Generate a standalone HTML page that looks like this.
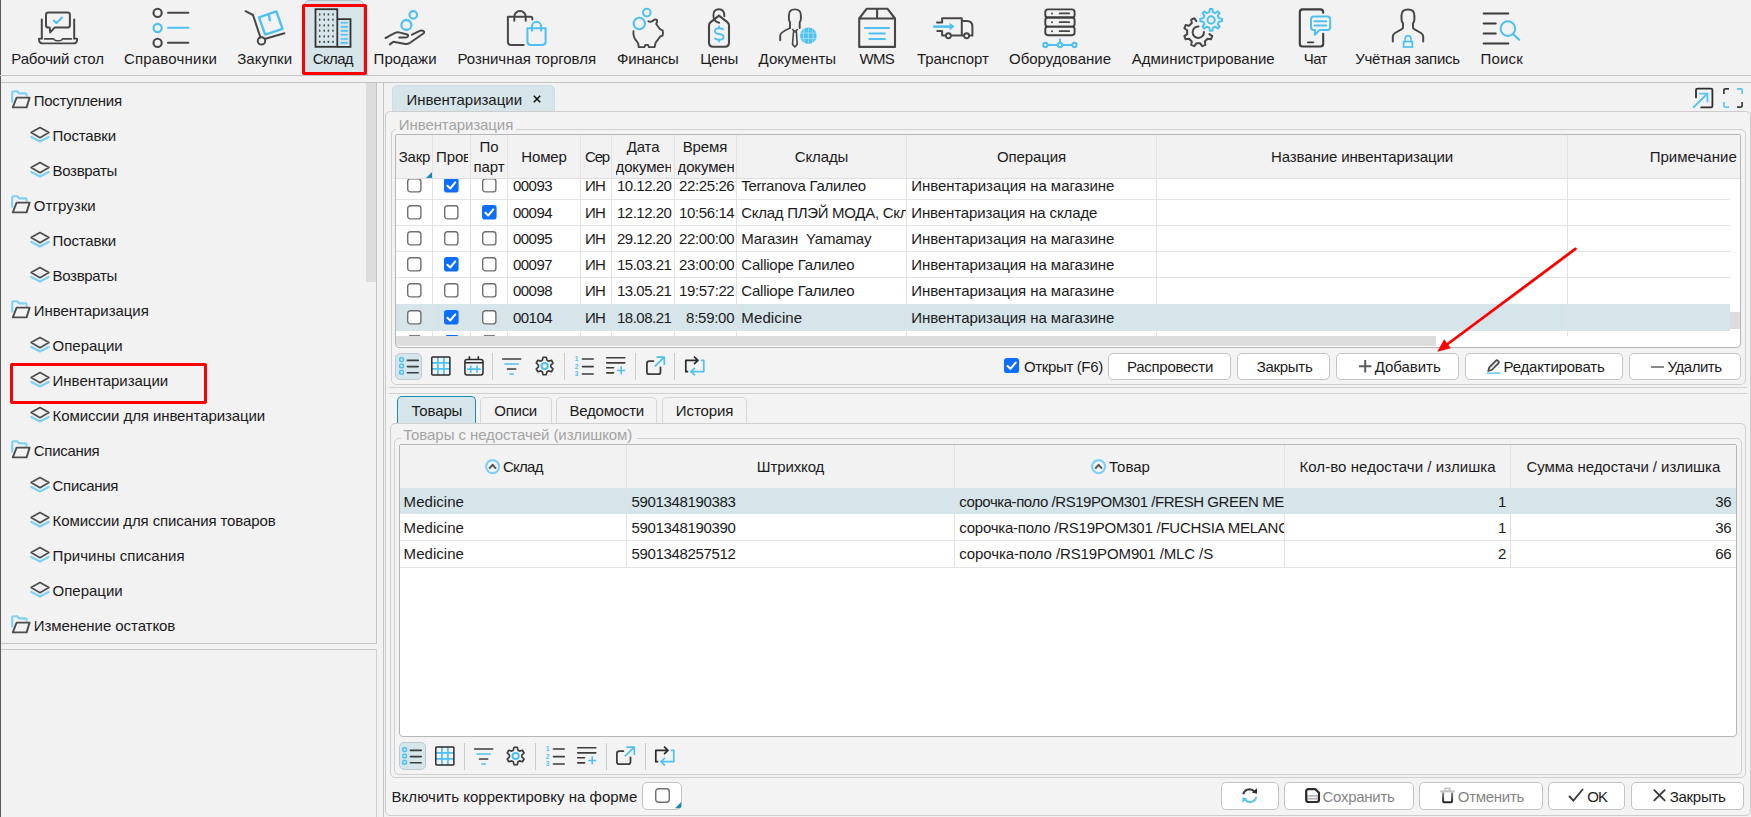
<!DOCTYPE html>
<html><head><meta charset="utf-8"><title>UI</title>
<style>
html,body{margin:0;padding:0;}
body{width:1751px;height:817px;overflow:hidden;background:#f2f2f2;font-family:"Liberation Sans", sans-serif;position:relative;}
.a{position:absolute;box-sizing:border-box;}
.t{position:absolute;white-space:pre;line-height:20px;font-size:15px;}
svg{overflow:visible}
</style></head><body>
<div class="a" style="left:0px;top:0px;width:1px;height:817px;background:#5c5c5c;"></div>
<div class="a" style="left:0px;top:75px;width:1751px;height:1px;background:#c4c4c4;"></div>
<div class="a" style="left:304px;top:-0.2px;width:59.6px;height:76.2px;background:#d5e5ea;border:1px solid #b9c2c5;border-radius:5px 5px 0 0;"></div>
<div class="a" style="left:302px;top:3.8px;width:65px;height:71.2px;border:3px solid #ff0000;border-radius:2px;"></div>
<div class="t" style="left:11.30px;top:49.00px;font-size:15px;color:#1b1b1b;letter-spacing:-0.139px;">Рабочий стол</div>
<div class="t" style="left:123.90px;top:49.00px;font-size:15px;color:#1b1b1b;letter-spacing:0.202px;">Справочники</div>
<div class="t" style="left:237.30px;top:49.00px;font-size:15px;color:#1b1b1b;letter-spacing:0.014px;">Закупки</div>
<div class="t" style="left:312.70px;top:49.00px;font-size:15px;color:#1b1b1b;letter-spacing:-0.624px;">Склад</div>
<div class="t" style="left:373.60px;top:49.00px;font-size:15px;color:#1b1b1b;letter-spacing:0.049px;">Продажи</div>
<div class="t" style="left:457.50px;top:49.00px;font-size:15px;color:#1b1b1b;letter-spacing:-0.037px;">Розничная торговля</div>
<div class="t" style="left:617.00px;top:49.00px;font-size:15px;color:#1b1b1b;letter-spacing:-0.198px;">Финансы</div>
<div class="t" style="left:700.20px;top:49.00px;font-size:15px;color:#1b1b1b;letter-spacing:-0.154px;">Цены</div>
<div class="t" style="left:758.60px;top:49.00px;font-size:15px;color:#1b1b1b;letter-spacing:0.030px;">Документы</div>
<div class="t" style="left:859.60px;top:49.00px;font-size:15px;color:#1b1b1b;letter-spacing:-0.791px;">WMS</div>
<div class="t" style="left:916.90px;top:49.00px;font-size:15px;color:#1b1b1b;letter-spacing:-0.027px;">Транспорт</div>
<div class="t" style="left:1009.00px;top:49.00px;font-size:15px;color:#1b1b1b;">Оборудование</div>
<div class="t" style="left:1131.80px;top:49.00px;font-size:15px;color:#1b1b1b;letter-spacing:-0.009px;">Администрирование</div>
<div class="t" style="left:1303.80px;top:49.00px;font-size:15px;color:#1b1b1b;letter-spacing:-0.630px;">Чат</div>
<div class="t" style="left:1355.20px;top:49.00px;font-size:15px;color:#1b1b1b;letter-spacing:-0.280px;">Учётная запись</div>
<div class="t" style="left:1480.40px;top:49.00px;font-size:15px;color:#1b1b1b;letter-spacing:0.204px;">Поиск</div>
<svg class="a" style="left:30px;top:4px;" width="60" height="48" viewBox="0 0 60 48" fill="none"><path d="M18.4 8.6 H37.5 Q39.9 8.6 39.9 11 V21.2 Q39.9 23.6 37.5 23.6 H24.6 L20.2 28.4 L19.7 23.6 H18.4 Q16 23.6 16 21.2 V11 Q16 8.6 18.4 8.6 Z" stroke="#474747" stroke-width="2" fill="none" stroke-linecap="round" stroke-linejoin="round" /><path d="M11.8 15.4 V34.4 M44.2 15.4 V34.4" stroke="#474747" stroke-width="2" fill="none" stroke-linecap="round" stroke-linejoin="round" /><path d="M9 34.6 H11.8 M44.2 34.6 H47.1 M9 34.6 V35.4 Q9 39.4 13 39.4 H43.1 Q47.1 39.4 47.1 35.4 V34.6" stroke="#474747" stroke-width="1.9" fill="none" stroke-linecap="round" stroke-linejoin="round" /><path d="M14.6 34.9 H23.6 Q24.8 36.8 27 36.8 H29.2 Q31.4 36.8 32.6 34.9 H41.4" stroke="#474747" stroke-width="1.6" fill="none" stroke-linecap="round" stroke-linejoin="round" /><path d="M23.8 16.6 L26.5 19 L32 13.6" stroke="#4fc1f1" stroke-width="2.1" fill="none" stroke-linecap="round" stroke-linejoin="round" /></svg>
<svg class="a" style="left:140px;top:4px;" width="60" height="48" viewBox="0 0 60 48" fill="none"><circle cx="17.6" cy="8.9" r="4.1" stroke="#474747" stroke-width="2.1" fill="none"/><path d="M28 8.7 H48.4" stroke="#474747" stroke-width="2" fill="none" stroke-linecap="round" stroke-linejoin="round" /><circle cx="17.6" cy="24" r="4.1" stroke="#4fc1f1" stroke-width="2.1" fill="none"/><path d="M28 23.8 H48.4" stroke="#4fc1f1" stroke-width="2" fill="none" stroke-linecap="round" stroke-linejoin="round" /><circle cx="17.6" cy="38.9" r="4.1" stroke="#474747" stroke-width="2.1" fill="none"/><path d="M28 38.7 H48.4" stroke="#474747" stroke-width="2" fill="none" stroke-linecap="round" stroke-linejoin="round" /></svg>
<svg class="a" style="left:235px;top:4px;" width="60" height="48" viewBox="0 0 60 48" fill="none"><path d="M24 13.3 L41.4 7.4 L47.5 24.8 L30.2 30.6 Z M33.6 10.2 L34.9 16.2" stroke="#4fc1f1" stroke-width="2.4" fill="none" stroke-linecap="round" stroke-linejoin="round" /><path d="M10.6 7.2 L18 11 L25.3 33" stroke="#474747" stroke-width="2" fill="none" stroke-linecap="round" stroke-linejoin="round" /><path d="M30.4 34.8 L49.4 29.2" stroke="#474747" stroke-width="2" fill="none" stroke-linecap="round" stroke-linejoin="round" /><circle cx="26.5" cy="36.9" r="3.7" stroke="#474747" stroke-width="2" fill="none"/></svg>
<svg class="a" style="left:303px;top:4px;" width="60" height="48" viewBox="0 0 60 48" fill="none"><rect x="12.5" y="5.2" width="21.8" height="37.6" stroke="#333" stroke-width="1.8" fill="none"/><path d="M34.3 15.1 H47.5 V42.8 H34.3" stroke="#333" stroke-width="1.8" fill="none"/><rect x="15.95" y="9.2" width="1.5" height="2.2" rx="0.5" fill="#4a4a4a"/><rect x="15.95" y="14.6" width="1.5" height="2.2" rx="0.5" fill="#4a4a4a"/><rect x="15.95" y="20.2" width="1.5" height="2.2" rx="0.5" fill="#4a4a4a"/><rect x="15.95" y="25.6" width="1.5" height="2.2" rx="0.5" fill="#4a4a4a"/><rect x="15.95" y="31.2" width="1.5" height="2.2" rx="0.5" fill="#4a4a4a"/><rect x="15.95" y="36.7" width="1.5" height="2.2" rx="0.5" fill="#4a4a4a"/><rect x="20.45" y="9.2" width="1.5" height="2.2" rx="0.5" fill="#4a4a4a"/><rect x="20.45" y="14.6" width="1.5" height="2.2" rx="0.5" fill="#4a4a4a"/><rect x="20.45" y="20.2" width="1.5" height="2.2" rx="0.5" fill="#4a4a4a"/><rect x="20.45" y="25.6" width="1.5" height="2.2" rx="0.5" fill="#4a4a4a"/><rect x="20.45" y="31.2" width="1.5" height="2.2" rx="0.5" fill="#4a4a4a"/><rect x="20.45" y="36.7" width="1.5" height="2.2" rx="0.5" fill="#4a4a4a"/><rect x="24.65" y="9.2" width="1.5" height="2.2" rx="0.5" fill="#4a4a4a"/><rect x="24.65" y="14.6" width="1.5" height="2.2" rx="0.5" fill="#4a4a4a"/><rect x="24.65" y="20.2" width="1.5" height="2.2" rx="0.5" fill="#4a4a4a"/><rect x="24.65" y="25.6" width="1.5" height="2.2" rx="0.5" fill="#4a4a4a"/><rect x="24.65" y="31.2" width="1.5" height="2.2" rx="0.5" fill="#4a4a4a"/><rect x="24.65" y="36.7" width="1.5" height="2.2" rx="0.5" fill="#4a4a4a"/><rect x="29.25" y="9.2" width="1.5" height="2.2" rx="0.5" fill="#4a4a4a"/><rect x="29.25" y="14.6" width="1.5" height="2.2" rx="0.5" fill="#4a4a4a"/><rect x="29.25" y="20.2" width="1.5" height="2.2" rx="0.5" fill="#4a4a4a"/><rect x="29.25" y="25.6" width="1.5" height="2.2" rx="0.5" fill="#4a4a4a"/><rect x="29.25" y="31.2" width="1.5" height="2.2" rx="0.5" fill="#4a4a4a"/><rect x="29.25" y="36.7" width="1.5" height="2.2" rx="0.5" fill="#4a4a4a"/><path d="M38.2 18.8 H44.4" stroke="#4fc1f1" stroke-width="1.6" stroke-linecap="round"/><path d="M38.2 22.9 H44.4" stroke="#4fc1f1" stroke-width="1.6" stroke-linecap="round"/><path d="M38.2 26.9 H44.4" stroke="#4fc1f1" stroke-width="1.6" stroke-linecap="round"/><path d="M38.2 30.8 H44.4" stroke="#4fc1f1" stroke-width="1.6" stroke-linecap="round"/><path d="M38.2 35 H44.4" stroke="#4fc1f1" stroke-width="1.6" stroke-linecap="round"/><path d="M38.2 38.9 H44.4" stroke="#4fc1f1" stroke-width="1.6" stroke-linecap="round"/></svg>
<svg class="a" style="left:375px;top:4px;" width="60" height="48" viewBox="0 0 60 48" fill="none"><circle cx="38.3" cy="10.9" r="3.75" stroke="#4fc1f1" stroke-width="2.2" fill="none"/><circle cx="31.4" cy="21" r="5" stroke="#4fc1f1" stroke-width="2.3" fill="none"/><path d="M10.6 34 Q17 30.5 20 28.9 Q22.5 28 25 28.6 L31.5 30.3 Q33.6 31 33 32.4 Q32.4 33.6 30.4 33.6 H24.2" stroke="#474747" stroke-width="2" fill="none" stroke-linecap="round" stroke-linejoin="round" /><path d="M14.9 40.4 L18.3 37.7 L30.4 40 Q32.6 40.3 34.4 39.2 L49 29 Q49.6 27.6 48.4 26.9 Q47 26.2 45.4 26.7 L37 30.7" stroke="#474747" stroke-width="2" fill="none" stroke-linecap="round" stroke-linejoin="round" /></svg>
<svg class="a" style="left:497px;top:4px;" width="60" height="48" viewBox="0 0 60 48" fill="none"><path d="M35.3 15.4 V14.2 Q35.3 12.7 33.8 12.7 H10.9 V37.4 Q10.9 41.1 14.6 41.1 H26.6" stroke="#474747" stroke-width="2" fill="none" stroke-linecap="round" stroke-linejoin="round" /><path d="M17.3 16.8 V12.7 A5.7 5.7 0 0 1 28.7 12.7 V16.8" stroke="#474747" stroke-width="2" fill="none" stroke-linecap="round" stroke-linejoin="round" /><path d="M30.4 24.2 H48.6 V37.6 Q48.6 41 45.2 41 H33.8 Q30.4 41 30.4 37.6 Z" stroke="#4fc1f1" stroke-width="2" fill="none" stroke-linecap="round" stroke-linejoin="round" /><path d="M35 26.8 V22.3 A4.55 4.55 0 0 1 44.1 22.3 V26.8" stroke="#4fc1f1" stroke-width="2" fill="none" stroke-linecap="round" stroke-linejoin="round" /></svg>
<svg class="a" style="left:618px;top:4px;" width="60" height="48" viewBox="0 0 60 48" fill="none"><circle cx="28.8" cy="8.6" r="3.8" stroke="#4fc1f1" stroke-width="2" fill="none"/><circle cx="21.3" cy="19.5" r="5.7" stroke="#4fc1f1" stroke-width="2.1" fill="none"/><path d="M15.5 27.2 Q14.6 33.2 19.4 38.2 Q20.4 39.4 20.7 43.1 H26.4 L27.3 40.9 H30 L30.9 43.1 H36.6 L37.6 38.8 L42.3 32.4 L44.6 31.6 Q45.3 28.8 44.7 26.5 L42 25.2 L38.2 20 Q39.6 17.4 39 16 Q37.8 15.2 36.3 15.7 Q34.6 17.2 33.4 17.6 Q31.8 17.9 30.4 17.3" stroke="#474747" stroke-width="1.9" fill="none" stroke-linecap="round" stroke-linejoin="round" /></svg>
<svg class="a" style="left:689px;top:4px;" width="60" height="48" viewBox="0 0 60 48" fill="none"><path d="M30 11.6 L38.6 18.4 Q40 19.5 40 21.4 V38.6 Q40 42.8 35.8 42.8 H24.2 Q20 42.8 20 38.6 V21.4 Q20 19.5 21.4 18.4 Z" stroke="#474747" stroke-width="2.1" fill="none" stroke-linecap="round" stroke-linejoin="round" /><path d="M35.4 12.2 Q35.4 5.2 30 5.2 Q24.4 5.2 24.4 11.2 Q24.4 17.6 30.2 18.7" stroke="#474747" stroke-width="1.9" fill="none" stroke-linecap="round" stroke-linejoin="round" /><path d="M34 25.2 Q32.4 24.3 30 24.3 Q26 24.3 26 27.2 Q26 29.6 30 30 Q34.6 30.6 34.6 33 Q34.6 35.7 30.4 35.7 Q28 35.7 26.2 34.6 M30 22.4 V24.2 M30 35.8 V37.6" stroke="#4fc1f1" stroke-width="1.9" fill="none" stroke-linecap="round" stroke-linejoin="round" /></svg>
<svg class="a" style="left:768px;top:4px;" width="60" height="48" viewBox="0 0 60 48" fill="none"><path d="M22 24 V18.2 Q20.9 16.6 20.9 14.4 V11.4 Q20.9 5.4 26.9 5.4 Q32.9 5.4 32.9 11.4 V14.4 Q32.9 16.6 31.7 18.2 V24" stroke="#474747" stroke-width="1.9" fill="none" stroke-linecap="round" stroke-linejoin="round" /><path d="M22 24 Q12.2 28.6 12.2 31.4 V36.2" stroke="#474747" stroke-width="1.9" fill="none" stroke-linecap="round" stroke-linejoin="round" /><path d="M24.6 25.5 L27 27.8 L29.4 25.5 M25.5 27.8 L24.5 40.4 L26.9 43 L29.2 40.4 L28.4 27.8" stroke="#474747" stroke-width="1.6" fill="none" stroke-linecap="round" stroke-linejoin="round" /><circle cx="40.4" cy="31.7" r="8.3" fill="#4fc1f1"/><path d="M32.4 29 H48.4 M32.4 34.4 H48.4 M40.4 23.6 V39.8 M36.4 24.4 Q34.4 31.7 36.4 39 M44.4 24.4 Q46.4 31.7 44.4 39" stroke="#a5def8" stroke-width="0.9" fill="none"/></svg>
<svg class="a" style="left:847px;top:4px;" width="60" height="48" viewBox="0 0 60 48" fill="none"><path d="M12.2 14.5 H48 V42.9 H12.2 Z M12.2 14.5 L19.6 4.8 H40.6 L48 14.5 M30.1 4.8 V14.5" stroke="#474747" stroke-width="2.1" fill="none" stroke-linecap="round" stroke-linejoin="round" /><path d="M17.9 24 H42 M22.3 29.4 H37.9 M22.3 35 H37.9" stroke="#4fc1f1" stroke-width="2" fill="none" stroke-linecap="round" stroke-linejoin="round" /></svg>
<svg class="a" style="left:923px;top:4px;" width="60" height="48" viewBox="0 0 60 48" fill="none"><path d="M14 18.4 H19.1 V14.2 H38.8 V31.4 M14.3 27 H19.1 V31.4 H22.6 M28.2 31.4 H40.8 M46.4 31.4 H49.4 V22.6 Q49.4 17.1 44 17.1 H38.8" stroke="#474747" stroke-width="2" fill="none" stroke-linecap="round" stroke-linejoin="round" /><circle cx="25.4" cy="31.7" r="2.5" stroke="#474747" stroke-width="1.9" fill="none"/><circle cx="43.6" cy="31.7" r="2.5" stroke="#474747" stroke-width="1.9" fill="none"/><path d="M10.2 22.6 H27" stroke="#4fc1f1" stroke-width="2.6"/><path d="M26.6 18.7 L31.6 22.6 L26.6 26.5 Z" fill="#4fc1f1"/></svg>
<svg class="a" style="left:1030px;top:4px;" width="60" height="48" viewBox="0 0 60 48" fill="none"><rect x="15.3" y="5.4" width="29.3" height="8.1" rx="2.6" stroke="#3f3f3f" stroke-width="1.9" fill="none"/><rect x="15.3" y="13.5" width="29.3" height="9.1" rx="2.6" stroke="#3f3f3f" stroke-width="1.9" fill="none"/><rect x="15.3" y="22.6" width="29.3" height="8.6" rx="2.6" stroke="#3f3f3f" stroke-width="1.9" fill="none"/><circle cx="22" cy="9.4" r="1" fill="#474747"/><path d="M29.6 9.4 H39.2" stroke="#474747" stroke-width="1.7" fill="none" stroke-linecap="round" stroke-linejoin="round" /><circle cx="22" cy="18.2" r="1" fill="#474747"/><path d="M29.6 18.2 H39.2" stroke="#474747" stroke-width="1.7" fill="none" stroke-linecap="round" stroke-linejoin="round" /><circle cx="22" cy="27.2" r="1" fill="#474747"/><path d="M29.6 27.2 H39.2" stroke="#474747" stroke-width="1.7" fill="none" stroke-linecap="round" stroke-linejoin="round" /><path d="M17.6 41 H27.8 M32.2 41 H42.3 M30 35.6 V38.8" stroke="#4fc1f1" stroke-width="2" fill="none" stroke-linecap="round" stroke-linejoin="round" /><circle cx="15.4" cy="41" r="2.15" stroke="#4fc1f1" stroke-width="2" fill="none"/><circle cx="30" cy="41" r="2.15" stroke="#4fc1f1" stroke-width="2" fill="none"/><circle cx="44.5" cy="41" r="2.15" stroke="#4fc1f1" stroke-width="2" fill="none"/></svg>
<svg class="a" style="left:1173px;top:4px;" width="60" height="48" viewBox="0 0 60 48" fill="none"><path d="M45.80 14.12 L48.92 14.62 L48.92 17.18 L45.80 17.68 L44.80 20.08 L46.66 22.65 L44.85 24.46 L42.28 22.60 L39.88 23.60 L39.38 26.72 L36.82 26.72 L36.32 23.60 L33.92 22.60 L31.35 24.46 L29.54 22.65 L31.40 20.08 L30.40 17.68 L27.28 17.18 L27.28 14.62 L30.40 14.12 L31.40 11.72 L29.54 9.15 L31.35 7.34 L33.92 9.20 L36.32 8.20 L36.82 5.08 L39.38 5.08 L39.88 8.20 L42.28 9.20 L44.85 7.34 L46.66 9.15 L44.80 11.72 Z" stroke="#4fc1f1" stroke-width="2" fill="none" stroke-linecap="round" stroke-linejoin="round" /><circle cx="38.1" cy="15.9" r="3.6" stroke="#4fc1f1" stroke-width="2" fill="none"/><path d="M36.43 30.14 L39.26 32.14 L37.95 35.29 L34.55 34.70 L31.80 37.45 L32.39 40.85 L29.24 42.16 L27.24 39.33 L23.36 39.33 L21.36 42.16 L18.21 40.85 L18.80 37.45 L16.05 34.70 L12.65 35.29 L11.34 32.14 L14.17 30.14 L14.17 26.26 L11.34 24.26 L12.65 21.11 L16.05 21.70 L18.80 18.95 L18.21 15.55 L21.36 14.24 L23.36 17.07" stroke="#474747" stroke-width="2" fill="none" stroke-linecap="round" stroke-linejoin="round" /><path d="M25.50 22.50 A5.7 5.7 0 1 0 31.00 28.00" stroke="#474747" stroke-width="2" fill="none" stroke-linecap="round" stroke-linejoin="round" /></svg>
<svg class="a" style="left:1285px;top:4px;" width="60" height="48" viewBox="0 0 60 48" fill="none"><path d="M38.2 8.8 V8.2 Q38.2 5.4 35.4 5.4 H17.6 Q14.8 5.4 14.8 8.2 V39.7 Q14.8 42.5 17.6 42.5 H35.4 Q38.2 42.5 38.2 39.7 V29.8" stroke="#3c3c3c" stroke-width="2.1" fill="none" stroke-linecap="round" stroke-linejoin="round" /><path d="M22.8 38.3 H28.4" stroke="#3c3c3c" stroke-width="1.8" fill="none" stroke-linecap="round" stroke-linejoin="round" /><path d="M28.8 12.5 H42.4 Q45.2 12.5 45.2 15.3 V23.3 Q45.2 26.1 42.4 26.1 H34.6 L29.8 30.8 L30 26.1 H28.8 Q26 26.1 26 23.3 V15.3 Q26 12.5 28.8 12.5 Z" stroke="#4fc1f1" stroke-width="2" fill="none" stroke-linecap="round" stroke-linejoin="round" /><path d="M29.4 17.2 H41.2 M29.4 21.6 H41.2" stroke="#4fc1f1" stroke-width="2" fill="none" stroke-linecap="round" stroke-linejoin="round" /></svg>
<svg class="a" style="left:1378px;top:4px;" width="60" height="48" viewBox="0 0 60 48" fill="none"><path d="M14.8 37.4 V32.6 Q14.8 30.4 17 29 L23.8 25.2 Q25 24.6 25 23.2 V19.4 Q23.5 17.6 23.5 15 V11.4 Q23.5 5.4 30 5.4 Q36.4 5.4 36.4 11.4 V15 Q36.4 17.6 35 19.4 V23.2 Q35 24.6 36.2 25.2 L43 29 Q45.2 30.4 45.2 32.6 V37.4" stroke="#474747" stroke-width="2" fill="none" stroke-linecap="round" stroke-linejoin="round" /><rect x="25.6" y="37.6" width="8.8" height="5.4" stroke="#4fc1f1" stroke-width="1.7" fill="none"/><path d="M27.2 37.4 V34.4 A2.85 2.85 0 0 1 32.9 34.4 V37.4" stroke="#4fc1f1" stroke-width="1.7" fill="none" stroke-linecap="round" stroke-linejoin="round" /></svg>
<svg class="a" style="left:1471px;top:4px;" width="60" height="48" viewBox="0 0 60 48" fill="none"><path d="M12.6 9.5 H37.4 M12.6 19.5 H24.8 M12.6 29.5 H24.8 M12.6 39.5 H37.4" stroke="#3a3a3a" stroke-width="1.9" fill="none" stroke-linecap="round" stroke-linejoin="round" /><circle cx="36.9" cy="24.6" r="7.3" stroke="#4fc1f1" stroke-width="2" fill="none"/><path d="M42.3 30.2 L48.2 35.7" stroke="#4fc1f1" stroke-width="2.2" fill="none" stroke-linecap="round" stroke-linejoin="round" /></svg>
<div class="a" style="left:1px;top:82px;width:1750px;height:1px;background:#c4c4c4;"></div>
<div class="a" style="left:376px;top:82px;width:1px;height:562px;background:#c4c4c4;"></div>
<div class="a" style="left:1px;top:643px;width:376px;height:1px;background:#c4c4c4;"></div>
<div class="a" style="left:1px;top:648.8px;width:376px;height:1px;background:#c8c8c8;"></div>
<div class="a" style="left:376px;top:649px;width:1px;height:168px;background:#d0d0d0;"></div>
<div class="a" style="left:366px;top:83px;width:10px;height:199px;background:#dcdcdc;"></div>
<svg class="a" style="left:10.5px;top:90px;" width="20" height="19" viewBox="0 0 20 19" fill="none"><path d="M1.2 12.5 V2.6 Q1.2 1.2 2.6 1.2 H6.2 L8.2 3.4 H14.4 Q15.6 3.4 15.6 4.8 V6.5" stroke="#7fd0f5" stroke-width="2.1" fill="none"/><path d="M5.6 7.6 H18.6 L15.6 17.4 H1.8 Z" stroke="#4d4d4d" stroke-width="1.9" stroke-linejoin="round" fill="none"/></svg>
<div class="t" style="left:33.80px;top:91.00px;font-size:15px;color:#1b1b1b;letter-spacing:-0.288px;">Поступления</div>
<svg class="a" style="left:29.8px;top:126.1px;" width="20" height="17" viewBox="0 0 20 17" fill="none"><path d="M1.4 11 L10 15.6 L18.6 11" stroke="#7fd0f5" stroke-width="2.3" stroke-linejoin="round" stroke-linecap="round" fill="none"/><path d="M10 1.5 L18.9 6.6 L10 11.7 L1.1 6.6 Z" stroke="#4d4d4d" stroke-width="1.7" stroke-linejoin="round" fill="none"/></svg>
<div class="t" style="left:52.60px;top:126.00px;font-size:15px;color:#1b1b1b;letter-spacing:-0.160px;">Поставки</div>
<svg class="a" style="left:29.8px;top:161.1px;" width="20" height="17" viewBox="0 0 20 17" fill="none"><path d="M1.4 11 L10 15.6 L18.6 11" stroke="#7fd0f5" stroke-width="2.3" stroke-linejoin="round" stroke-linecap="round" fill="none"/><path d="M10 1.5 L18.9 6.6 L10 11.7 L1.1 6.6 Z" stroke="#4d4d4d" stroke-width="1.7" stroke-linejoin="round" fill="none"/></svg>
<div class="t" style="left:52.60px;top:161.00px;font-size:15px;color:#1b1b1b;letter-spacing:-0.329px;">Возвраты</div>
<svg class="a" style="left:10.5px;top:195px;" width="20" height="19" viewBox="0 0 20 19" fill="none"><path d="M1.2 12.5 V2.6 Q1.2 1.2 2.6 1.2 H6.2 L8.2 3.4 H14.4 Q15.6 3.4 15.6 4.8 V6.5" stroke="#7fd0f5" stroke-width="2.1" fill="none"/><path d="M5.6 7.6 H18.6 L15.6 17.4 H1.8 Z" stroke="#4d4d4d" stroke-width="1.9" stroke-linejoin="round" fill="none"/></svg>
<div class="t" style="left:33.80px;top:196.00px;font-size:15px;color:#1b1b1b;letter-spacing:0.061px;">Отгрузки</div>
<svg class="a" style="left:29.8px;top:231.1px;" width="20" height="17" viewBox="0 0 20 17" fill="none"><path d="M1.4 11 L10 15.6 L18.6 11" stroke="#7fd0f5" stroke-width="2.3" stroke-linejoin="round" stroke-linecap="round" fill="none"/><path d="M10 1.5 L18.9 6.6 L10 11.7 L1.1 6.6 Z" stroke="#4d4d4d" stroke-width="1.7" stroke-linejoin="round" fill="none"/></svg>
<div class="t" style="left:52.60px;top:231.00px;font-size:15px;color:#1b1b1b;letter-spacing:-0.160px;">Поставки</div>
<svg class="a" style="left:29.8px;top:266.1px;" width="20" height="17" viewBox="0 0 20 17" fill="none"><path d="M1.4 11 L10 15.6 L18.6 11" stroke="#7fd0f5" stroke-width="2.3" stroke-linejoin="round" stroke-linecap="round" fill="none"/><path d="M10 1.5 L18.9 6.6 L10 11.7 L1.1 6.6 Z" stroke="#4d4d4d" stroke-width="1.7" stroke-linejoin="round" fill="none"/></svg>
<div class="t" style="left:52.60px;top:266.00px;font-size:15px;color:#1b1b1b;letter-spacing:-0.329px;">Возвраты</div>
<svg class="a" style="left:10.5px;top:300px;" width="20" height="19" viewBox="0 0 20 19" fill="none"><path d="M1.2 12.5 V2.6 Q1.2 1.2 2.6 1.2 H6.2 L8.2 3.4 H14.4 Q15.6 3.4 15.6 4.8 V6.5" stroke="#7fd0f5" stroke-width="2.1" fill="none"/><path d="M5.6 7.6 H18.6 L15.6 17.4 H1.8 Z" stroke="#4d4d4d" stroke-width="1.9" stroke-linejoin="round" fill="none"/></svg>
<div class="t" style="left:33.80px;top:301.00px;font-size:15px;color:#1b1b1b;letter-spacing:-0.041px;">Инвентаризация</div>
<svg class="a" style="left:29.8px;top:336.1px;" width="20" height="17" viewBox="0 0 20 17" fill="none"><path d="M1.4 11 L10 15.6 L18.6 11" stroke="#7fd0f5" stroke-width="2.3" stroke-linejoin="round" stroke-linecap="round" fill="none"/><path d="M10 1.5 L18.9 6.6 L10 11.7 L1.1 6.6 Z" stroke="#4d4d4d" stroke-width="1.7" stroke-linejoin="round" fill="none"/></svg>
<div class="t" style="left:52.60px;top:336.00px;font-size:15px;color:#1b1b1b;letter-spacing:-0.021px;">Операции</div>
<svg class="a" style="left:29.8px;top:371.1px;" width="20" height="17" viewBox="0 0 20 17" fill="none"><path d="M1.4 11 L10 15.6 L18.6 11" stroke="#7fd0f5" stroke-width="2.3" stroke-linejoin="round" stroke-linecap="round" fill="none"/><path d="M10 1.5 L18.9 6.6 L10 11.7 L1.1 6.6 Z" stroke="#4d4d4d" stroke-width="1.7" stroke-linejoin="round" fill="none"/></svg>
<div class="t" style="left:52.60px;top:371.00px;font-size:15px;color:#1b1b1b;letter-spacing:-0.023px;">Инвентаризации</div>
<svg class="a" style="left:29.8px;top:406.1px;" width="20" height="17" viewBox="0 0 20 17" fill="none"><path d="M1.4 11 L10 15.6 L18.6 11" stroke="#7fd0f5" stroke-width="2.3" stroke-linejoin="round" stroke-linecap="round" fill="none"/><path d="M10 1.5 L18.9 6.6 L10 11.7 L1.1 6.6 Z" stroke="#4d4d4d" stroke-width="1.7" stroke-linejoin="round" fill="none"/></svg>
<div class="t" style="left:52.60px;top:406.00px;font-size:15px;color:#1b1b1b;letter-spacing:-0.090px;">Комиссии для инвентаризации</div>
<svg class="a" style="left:10.5px;top:440px;" width="20" height="19" viewBox="0 0 20 19" fill="none"><path d="M1.2 12.5 V2.6 Q1.2 1.2 2.6 1.2 H6.2 L8.2 3.4 H14.4 Q15.6 3.4 15.6 4.8 V6.5" stroke="#7fd0f5" stroke-width="2.1" fill="none"/><path d="M5.6 7.6 H18.6 L15.6 17.4 H1.8 Z" stroke="#4d4d4d" stroke-width="1.9" stroke-linejoin="round" fill="none"/></svg>
<div class="t" style="left:33.80px;top:441.00px;font-size:15px;color:#1b1b1b;letter-spacing:-0.309px;">Списания</div>
<svg class="a" style="left:29.8px;top:476.1px;" width="20" height="17" viewBox="0 0 20 17" fill="none"><path d="M1.4 11 L10 15.6 L18.6 11" stroke="#7fd0f5" stroke-width="2.3" stroke-linejoin="round" stroke-linecap="round" fill="none"/><path d="M10 1.5 L18.9 6.6 L10 11.7 L1.1 6.6 Z" stroke="#4d4d4d" stroke-width="1.7" stroke-linejoin="round" fill="none"/></svg>
<div class="t" style="left:52.60px;top:476.00px;font-size:15px;color:#1b1b1b;letter-spacing:-0.309px;">Списания</div>
<svg class="a" style="left:29.8px;top:511.1px;" width="20" height="17" viewBox="0 0 20 17" fill="none"><path d="M1.4 11 L10 15.6 L18.6 11" stroke="#7fd0f5" stroke-width="2.3" stroke-linejoin="round" stroke-linecap="round" fill="none"/><path d="M10 1.5 L18.9 6.6 L10 11.7 L1.1 6.6 Z" stroke="#4d4d4d" stroke-width="1.7" stroke-linejoin="round" fill="none"/></svg>
<div class="t" style="left:52.60px;top:511.00px;font-size:15px;color:#1b1b1b;letter-spacing:-0.108px;">Комиссии для списания товаров</div>
<svg class="a" style="left:29.8px;top:546.1px;" width="20" height="17" viewBox="0 0 20 17" fill="none"><path d="M1.4 11 L10 15.6 L18.6 11" stroke="#7fd0f5" stroke-width="2.3" stroke-linejoin="round" stroke-linecap="round" fill="none"/><path d="M10 1.5 L18.9 6.6 L10 11.7 L1.1 6.6 Z" stroke="#4d4d4d" stroke-width="1.7" stroke-linejoin="round" fill="none"/></svg>
<div class="t" style="left:52.60px;top:546.00px;font-size:15px;color:#1b1b1b;letter-spacing:0.027px;">Причины списания</div>
<svg class="a" style="left:29.8px;top:581.1px;" width="20" height="17" viewBox="0 0 20 17" fill="none"><path d="M1.4 11 L10 15.6 L18.6 11" stroke="#7fd0f5" stroke-width="2.3" stroke-linejoin="round" stroke-linecap="round" fill="none"/><path d="M10 1.5 L18.9 6.6 L10 11.7 L1.1 6.6 Z" stroke="#4d4d4d" stroke-width="1.7" stroke-linejoin="round" fill="none"/></svg>
<div class="t" style="left:52.60px;top:581.00px;font-size:15px;color:#1b1b1b;letter-spacing:-0.021px;">Операции</div>
<svg class="a" style="left:10.5px;top:615px;" width="20" height="19" viewBox="0 0 20 19" fill="none"><path d="M1.2 12.5 V2.6 Q1.2 1.2 2.6 1.2 H6.2 L8.2 3.4 H14.4 Q15.6 3.4 15.6 4.8 V6.5" stroke="#7fd0f5" stroke-width="2.1" fill="none"/><path d="M5.6 7.6 H18.6 L15.6 17.4 H1.8 Z" stroke="#4d4d4d" stroke-width="1.9" stroke-linejoin="round" fill="none"/></svg>
<div class="t" style="left:33.80px;top:616.00px;font-size:15px;color:#1b1b1b;letter-spacing:-0.061px;">Изменение остатков</div>
<div class="a" style="left:10px;top:363.2px;width:197px;height:40.6px;border:3px solid #ff0000;border-radius:2px;"></div>
<div class="a" style="left:383px;top:82px;width:1px;height:735px;background:#c4c4c4;"></div>
<div class="a" style="left:392.4px;top:85px;width:162.2px;height:27px;background:#d5e5ea;border:1px solid #cddde2;border-radius:5px 5px 0 0;"></div>
<div class="t" style="left:406.40px;top:90.00px;font-size:15px;color:#1b1b1b;letter-spacing:-0.016px;">Инвентаризации</div>
<svg class="a" style="left:532.5px;top:94.5px;" width="8" height="8" viewBox="0 0 8 8" fill="none"><path d="M0.8 0.8 L7.2 7.2 M7.2 0.8 L0.8 7.2" stroke="#111" stroke-width="1.6"/></svg>
<svg class="a" style="left:1693px;top:88px;" width="20" height="20" viewBox="0 0 20 20" fill="none"><path d="M3 9.4 V2.1 Q3 0.7 4.4 0.7 H18 Q19.4 0.7 19.4 2.1 V18 Q19.4 19.4 18 19.4 H8.2" stroke="#2e2e2e" stroke-width="1.8" fill="none" stroke-linecap="round"/><path d="M0.6 19.2 L14 6 M6.7 5.6 H14.4 V13.5" stroke="#5bc4f0" stroke-width="1.9" fill="none" stroke-linecap="round"/></svg>
<svg class="a" style="left:1723px;top:88px;" width="20" height="20" viewBox="0 0 20 20" fill="none"><path d="M0.9 6 V2.2 Q0.9 0.9 2.2 0.9 H6" stroke="#3a3a3a" stroke-width="1.7"/><path d="M14 19.1 H17.8 Q19.1 19.1 19.1 17.8 V14" stroke="#3a3a3a" stroke-width="1.7"/><path d="M14 0.9 H17.8 Q19.1 0.9 19.1 2.2 V6" stroke="#5bc4f0" stroke-width="1.7"/><path d="M0.9 14 V17.8 Q0.9 19.1 2.2 19.1 H6" stroke="#5bc4f0" stroke-width="1.7"/></svg>
<div class="a" style="left:385.4px;top:111.3px;width:1365.3px;height:704.5px;background:#f3f3f3;border:1px solid #cdcdcd;border-radius:5px;"></div>
<div class="a" style="left:390.5px;top:128.5px;width:1355.5px;height:256.5px;border:1px solid #cfcfcf;border-radius:5px;"></div>
<div class="a" style="left:396px;top:122px;width:120px;height:14px;background:#f3f3f3;"></div>
<div class="t" style="left:398.80px;top:115.00px;font-size:15px;color:#a3a3a3;letter-spacing:-0.084px;">Инвентаризация</div>
<div class="a" style="left:395px;top:134px;width:1346px;height:214px;background:#fff;border:1px solid #b6b6b6;border-radius:2px 2px 4px 4px;"></div>
<div class="a" style="left:396px;top:135px;width:1344px;height:43px;background:#f2f2f2;"></div>
<div class="a" style="left:396px;top:178px;width:1344px;height:1px;background:#dedede;"></div>
<div class="a" style="left:396px;top:304.3px;width:1334px;height:26.4px;background:#d5e5ea;"></div>
<div class="a" style="left:396px;top:199px;width:1334px;height:1px;background:#e3e3e3;"></div>
<div class="a" style="left:396px;top:225px;width:1334px;height:1px;background:#e3e3e3;"></div>
<div class="a" style="left:396px;top:251px;width:1334px;height:1px;background:#e3e3e3;"></div>
<div class="a" style="left:396px;top:277px;width:1334px;height:1px;background:#e3e3e3;"></div>
<div class="a" style="left:432px;top:135px;width:1px;height:201px;background:#e2e2e2;"></div>
<div class="a" style="left:470px;top:135px;width:1px;height:201px;background:#e2e2e2;"></div>
<div class="a" style="left:507px;top:135px;width:1px;height:201px;background:#e2e2e2;"></div>
<div class="a" style="left:580px;top:135px;width:1px;height:201px;background:#e2e2e2;"></div>
<div class="a" style="left:611px;top:135px;width:1px;height:201px;background:#e2e2e2;"></div>
<div class="a" style="left:674px;top:135px;width:1px;height:201px;background:#e2e2e2;"></div>
<div class="a" style="left:736px;top:135px;width:1px;height:201px;background:#e2e2e2;"></div>
<div class="a" style="left:906px;top:135px;width:1px;height:201px;background:#e2e2e2;"></div>
<div class="a" style="left:1156px;top:135px;width:1px;height:201px;background:#e2e2e2;"></div>
<div class="a" style="left:1567px;top:135px;width:1px;height:201px;background:#e2e2e2;"></div>
<div class="t" style="left:398.80px;top:147.00px;font-size:15px;color:#1b1b1b;letter-spacing:-0.278px;">Закр</div>
<div class="t" style="left:436.00px;top:147.00px;font-size:15px;color:#1b1b1b;letter-spacing:-0.120px;width:31.5px;overflow:hidden;">Пров</div>
<div class="t" style="left:479.56px;top:137.00px;font-size:15px;color:#1b1b1b;letter-spacing:-0.120px;">По</div>
<div class="t" style="left:473.56px;top:157.00px;font-size:15px;color:#1b1b1b;letter-spacing:-0.120px;">парт</div>
<div class="t" style="left:521.21px;top:147.00px;font-size:15px;color:#1b1b1b;letter-spacing:-0.120px;">Номер</div>
<div class="t" style="left:585.00px;top:147.00px;font-size:15px;color:#1b1b1b;letter-spacing:-1.177px;">Сер</div>
<div class="t" style="left:626.63px;top:137.00px;font-size:15px;color:#1b1b1b;letter-spacing:-0.120px;">Дата</div>
<div class="t" style="left:615.50px;top:157.00px;font-size:15px;color:#1b1b1b;letter-spacing:-0.120px;width:55.5px;overflow:hidden;">документа</div>
<div class="t" style="left:682.74px;top:137.00px;font-size:15px;color:#1b1b1b;letter-spacing:-0.120px;">Время</div>
<div class="t" style="left:677.50px;top:157.00px;font-size:15px;color:#1b1b1b;letter-spacing:-0.120px;width:56.5px;overflow:hidden;">документа</div>
<div class="t" style="left:794.76px;top:147.00px;font-size:15px;color:#1b1b1b;letter-spacing:-0.120px;">Склады</div>
<div class="t" style="left:997.02px;top:147.00px;font-size:15px;color:#1b1b1b;letter-spacing:-0.120px;">Операция</div>
<div class="t" style="left:1271.07px;top:147.00px;font-size:15px;color:#1b1b1b;letter-spacing:-0.120px;">Название инвентаризации</div>
<div class="t" style="left:1649.70px;top:147.00px;font-size:15px;color:#1b1b1b;letter-spacing:0.027px;">Примечание</div>
<svg class="a" style="left:426px;top:172px;" width="6" height="6" viewBox="0 0 6 6" fill="none"><path d="M6 0 V6 H0 Z" fill="#1b8bb4"/></svg>
<div class="a" style="left:407px;top:178.6px;width:16px;height:16.4px;overflow:hidden"><svg style="position:absolute;left:0;top:-1px" width="14.6" height="14.6" viewBox="0 0 14.6 14.6"><rect x="0.7" y="0.7" width="13.2" height="13.2" rx="2.7" fill="#fff" stroke="#6f6f6f" stroke-width="1.4"/></svg></div>
<div class="a" style="left:444.2px;top:178.6px;width:16px;height:16.4px;overflow:hidden"><svg style="position:absolute;left:0;top:-1px" width="14.6" height="14.6" viewBox="0 0 14.6 14.6"><rect x="0" y="0" width="14.6" height="14.6" rx="2.8" fill="#0d6efd"/><path d="M3.4 7.7 L6.2 10.5 L11.3 4.4" stroke="#fff" stroke-width="2" fill="none" stroke-linecap="round" stroke-linejoin="round"/></svg></div>
<div class="a" style="left:482.1px;top:178.6px;width:16px;height:16.4px;overflow:hidden"><svg style="position:absolute;left:0;top:-1px" width="14.6" height="14.6" viewBox="0 0 14.6 14.6"><rect x="0.7" y="0.7" width="13.2" height="13.2" rx="2.7" fill="#fff" stroke="#6f6f6f" stroke-width="1.4"/></svg></div>
<div class="t" style="left:513.00px;top:176.00px;font-size:15px;color:#1b1b1b;letter-spacing:-0.544px;">00093</div>
<div class="t" style="left:585.00px;top:176.00px;font-size:15px;color:#1b1b1b;letter-spacing:-0.663px;">ИН</div>
<div class="t" style="left:617.00px;top:176.00px;font-size:15px;color:#1b1b1b;letter-spacing:-0.511px;">10.12.20</div>
<div class="t" style="left:679.10px;top:176.00px;font-size:15px;color:#1b1b1b;letter-spacing:-0.399px;">22:25:26</div>
<div class="t" style="left:741.30px;top:176.00px;font-size:15px;color:#1b1b1b;letter-spacing:-0.268px;">Terranova Галилео</div>
<div class="t" style="left:911.30px;top:176.00px;font-size:15px;color:#1b1b1b;letter-spacing:-0.053px;">Инвентаризация на магазине</div>
<svg class="a" style="left:407px;top:204.6px;" width="14.6" height="14.6" viewBox="0 0 14.6 14.6" fill="none"><rect x="0.7" y="0.7" width="13.2" height="13.2" rx="2.7" fill="#fff" stroke="#6f6f6f" stroke-width="1.4"/></svg>
<svg class="a" style="left:444.2px;top:204.6px;" width="14.6" height="14.6" viewBox="0 0 14.6 14.6" fill="none"><rect x="0.7" y="0.7" width="13.2" height="13.2" rx="2.7" fill="#fff" stroke="#6f6f6f" stroke-width="1.4"/></svg>
<svg class="a" style="left:482.1px;top:204.6px;" width="14.6" height="14.6" viewBox="0 0 14.6 14.6" fill="none"><rect x="0" y="0" width="14.6" height="14.6" rx="2.8" fill="#0d6efd"/><path d="M3.4 7.7 L6.2 10.5 L11.3 4.4" stroke="#fff" stroke-width="2" fill="none" stroke-linecap="round" stroke-linejoin="round"/></svg>
<div class="t" style="left:513.00px;top:203.00px;font-size:15px;color:#1b1b1b;letter-spacing:-0.544px;">00094</div>
<div class="t" style="left:585.00px;top:203.00px;font-size:15px;color:#1b1b1b;letter-spacing:-0.663px;">ИН</div>
<div class="t" style="left:617.00px;top:203.00px;font-size:15px;color:#1b1b1b;letter-spacing:-0.511px;">12.12.20</div>
<div class="t" style="left:679.10px;top:203.00px;font-size:15px;color:#1b1b1b;letter-spacing:-0.399px;">10:56:14</div>
<div class="t" style="left:741.30px;top:203.00px;font-size:15px;color:#1b1b1b;letter-spacing:-0.288px;width:165px;overflow:hidden;">Склад ПЛЭЙ МОДА, Склад</div>
<div class="t" style="left:911.30px;top:203.00px;font-size:15px;color:#1b1b1b;letter-spacing:-0.123px;">Инвентаризация на складе</div>
<svg class="a" style="left:407px;top:230.6px;" width="14.6" height="14.6" viewBox="0 0 14.6 14.6" fill="none"><rect x="0.7" y="0.7" width="13.2" height="13.2" rx="2.7" fill="#fff" stroke="#6f6f6f" stroke-width="1.4"/></svg>
<svg class="a" style="left:444.2px;top:230.6px;" width="14.6" height="14.6" viewBox="0 0 14.6 14.6" fill="none"><rect x="0.7" y="0.7" width="13.2" height="13.2" rx="2.7" fill="#fff" stroke="#6f6f6f" stroke-width="1.4"/></svg>
<svg class="a" style="left:482.1px;top:230.6px;" width="14.6" height="14.6" viewBox="0 0 14.6 14.6" fill="none"><rect x="0.7" y="0.7" width="13.2" height="13.2" rx="2.7" fill="#fff" stroke="#6f6f6f" stroke-width="1.4"/></svg>
<div class="t" style="left:513.00px;top:229.00px;font-size:15px;color:#1b1b1b;letter-spacing:-0.544px;">00095</div>
<div class="t" style="left:585.00px;top:229.00px;font-size:15px;color:#1b1b1b;letter-spacing:-0.663px;">ИН</div>
<div class="t" style="left:617.00px;top:229.00px;font-size:15px;color:#1b1b1b;letter-spacing:-0.511px;">29.12.20</div>
<div class="t" style="left:679.10px;top:229.00px;font-size:15px;color:#1b1b1b;letter-spacing:-0.399px;">22:00:00</div>
<div class="t" style="left:741.30px;top:229.00px;font-size:15px;color:#1b1b1b;letter-spacing:-0.163px;">Магазин  Yamamay</div>
<div class="t" style="left:911.30px;top:229.00px;font-size:15px;color:#1b1b1b;letter-spacing:-0.053px;">Инвентаризация на магазине</div>
<svg class="a" style="left:407px;top:256.6px;" width="14.6" height="14.6" viewBox="0 0 14.6 14.6" fill="none"><rect x="0.7" y="0.7" width="13.2" height="13.2" rx="2.7" fill="#fff" stroke="#6f6f6f" stroke-width="1.4"/></svg>
<svg class="a" style="left:444.2px;top:256.6px;" width="14.6" height="14.6" viewBox="0 0 14.6 14.6" fill="none"><rect x="0" y="0" width="14.6" height="14.6" rx="2.8" fill="#0d6efd"/><path d="M3.4 7.7 L6.2 10.5 L11.3 4.4" stroke="#fff" stroke-width="2" fill="none" stroke-linecap="round" stroke-linejoin="round"/></svg>
<svg class="a" style="left:482.1px;top:256.6px;" width="14.6" height="14.6" viewBox="0 0 14.6 14.6" fill="none"><rect x="0.7" y="0.7" width="13.2" height="13.2" rx="2.7" fill="#fff" stroke="#6f6f6f" stroke-width="1.4"/></svg>
<div class="t" style="left:513.00px;top:255.00px;font-size:15px;color:#1b1b1b;letter-spacing:-0.544px;">00097</div>
<div class="t" style="left:585.00px;top:255.00px;font-size:15px;color:#1b1b1b;letter-spacing:-0.663px;">ИН</div>
<div class="t" style="left:617.00px;top:255.00px;font-size:15px;color:#1b1b1b;letter-spacing:-0.511px;">15.03.21</div>
<div class="t" style="left:679.10px;top:255.00px;font-size:15px;color:#1b1b1b;letter-spacing:-0.399px;">23:00:00</div>
<div class="t" style="left:741.30px;top:255.00px;font-size:15px;color:#1b1b1b;letter-spacing:-0.223px;">Calliope Галилео</div>
<div class="t" style="left:911.30px;top:255.00px;font-size:15px;color:#1b1b1b;letter-spacing:-0.053px;">Инвентаризация на магазине</div>
<svg class="a" style="left:407px;top:282.6px;" width="14.6" height="14.6" viewBox="0 0 14.6 14.6" fill="none"><rect x="0.7" y="0.7" width="13.2" height="13.2" rx="2.7" fill="#fff" stroke="#6f6f6f" stroke-width="1.4"/></svg>
<svg class="a" style="left:444.2px;top:282.6px;" width="14.6" height="14.6" viewBox="0 0 14.6 14.6" fill="none"><rect x="0.7" y="0.7" width="13.2" height="13.2" rx="2.7" fill="#fff" stroke="#6f6f6f" stroke-width="1.4"/></svg>
<svg class="a" style="left:482.1px;top:282.6px;" width="14.6" height="14.6" viewBox="0 0 14.6 14.6" fill="none"><rect x="0.7" y="0.7" width="13.2" height="13.2" rx="2.7" fill="#fff" stroke="#6f6f6f" stroke-width="1.4"/></svg>
<div class="t" style="left:513.00px;top:281.00px;font-size:15px;color:#1b1b1b;letter-spacing:-0.544px;">00098</div>
<div class="t" style="left:585.00px;top:281.00px;font-size:15px;color:#1b1b1b;letter-spacing:-0.663px;">ИН</div>
<div class="t" style="left:617.00px;top:281.00px;font-size:15px;color:#1b1b1b;letter-spacing:-0.511px;">13.05.21</div>
<div class="t" style="left:679.10px;top:281.00px;font-size:15px;color:#1b1b1b;letter-spacing:-0.399px;">19:57:22</div>
<div class="t" style="left:741.30px;top:281.00px;font-size:15px;color:#1b1b1b;letter-spacing:-0.223px;">Calliope Галилео</div>
<div class="t" style="left:911.30px;top:281.00px;font-size:15px;color:#1b1b1b;letter-spacing:-0.053px;">Инвентаризация на магазине</div>
<svg class="a" style="left:407px;top:309.6px;" width="14.6" height="14.6" viewBox="0 0 14.6 14.6" fill="none"><rect x="0.7" y="0.7" width="13.2" height="13.2" rx="2.7" fill="#fff" stroke="#6f6f6f" stroke-width="1.4"/></svg>
<svg class="a" style="left:444.2px;top:309.6px;" width="14.6" height="14.6" viewBox="0 0 14.6 14.6" fill="none"><rect x="0" y="0" width="14.6" height="14.6" rx="2.8" fill="#0d6efd"/><path d="M3.4 7.7 L6.2 10.5 L11.3 4.4" stroke="#fff" stroke-width="2" fill="none" stroke-linecap="round" stroke-linejoin="round"/></svg>
<svg class="a" style="left:482.1px;top:309.6px;" width="14.6" height="14.6" viewBox="0 0 14.6 14.6" fill="none"><rect x="0.7" y="0.7" width="13.2" height="13.2" rx="2.7" fill="#fff" stroke="#6f6f6f" stroke-width="1.4"/></svg>
<div class="t" style="left:513.00px;top:308.00px;font-size:15px;color:#1b1b1b;letter-spacing:-0.544px;">00104</div>
<div class="t" style="left:585.00px;top:308.00px;font-size:15px;color:#1b1b1b;letter-spacing:-0.663px;">ИН</div>
<div class="t" style="left:617.00px;top:308.00px;font-size:15px;color:#1b1b1b;letter-spacing:-0.511px;">18.08.21</div>
<div class="t" style="left:686.05px;top:308.00px;font-size:15px;color:#1b1b1b;letter-spacing:-0.257px;">8:59:00</div>
<div class="t" style="left:741.30px;top:308.00px;font-size:15px;color:#1b1b1b;letter-spacing:0.121px;">Medicine</div>
<div class="t" style="left:911.30px;top:308.00px;font-size:15px;color:#1b1b1b;letter-spacing:-0.053px;">Инвентаризация на магазине</div>
<div class="a" style="left:409px;top:335px;width:11px;height:1.2px;background:#7a7a7a;border-radius:1px;"></div>
<div class="a" style="left:446px;top:335px;width:11.5px;height:1.2px;background:#0d6efd;border-radius:1px;"></div>
<div class="a" style="left:484px;top:335px;width:11px;height:1.2px;background:#7a7a7a;border-radius:1px;"></div>
<div class="a" style="left:396px;top:336.2px;width:1040px;height:9.7px;background:#dcdcdc;"></div>
<div class="a" style="left:1730px;top:312px;width:10px;height:17px;background:#dcdcdc;"></div>
<div class="a" style="left:395px;top:353px;width:27px;height:27px;background:#d5e5ea;border:1px solid #bccacf;border-radius:5px;"></div>
<svg class="a" style="left:399px;top:350px;" width="24" height="34" viewBox="0 0 24 34" fill="none"><rect x="0.75" y="7.8" width="3.6" height="3.6" rx="0.9" stroke="#4fc1f1" stroke-width="1.5" fill="#c8e9f7"/><path d="M8.4 10.4 H19.2" stroke="#3d3d3d" stroke-width="1.6" fill="none" stroke-linecap="round" stroke-linejoin="round" /><rect x="0.75" y="14.2" width="3.6" height="3.6" rx="0.9" stroke="#4fc1f1" stroke-width="1.5" fill="#c8e9f7"/><path d="M8.4 16.6 H19.2" stroke="#3d3d3d" stroke-width="1.6" fill="none" stroke-linecap="round" stroke-linejoin="round" /><rect x="0.75" y="20.5" width="3.6" height="3.6" rx="0.9" stroke="#4fc1f1" stroke-width="1.5" fill="#c8e9f7"/><path d="M8.4 22.8 H19.2" stroke="#3d3d3d" stroke-width="1.6" fill="none" stroke-linecap="round" stroke-linejoin="round" /></svg>
<svg class="a" style="left:431.1px;top:350px;" width="24" height="34" viewBox="0 0 24 34" fill="none"><path d="M6.9 7 V25 M12.9 7 V25 M0.8 12.85 H19 M0.8 18.85 H19" stroke="#4fc1f1" stroke-width="1.7" fill="none" stroke-linecap="butt" stroke-linejoin="round" /><rect x="0.8" y="7" width="18.1" height="17.9" rx="0.8" stroke="#2b2b2b" stroke-width="1.5" fill="none"/></svg>
<svg class="a" style="left:464.1px;top:350px;" width="24" height="34" viewBox="0 0 24 34" fill="none"><path d="M3 19.1 H16.7 M6.7 15.4 V22.8 M13 15.4 V22.8" stroke="#4fc1f1" stroke-width="1.7" fill="none" stroke-linecap="butt" stroke-linejoin="round" /><path d="M5.4 6.3 V9 M14.3 6.3 V9 M0.9 12.7 H19" stroke="#2b2b2b" stroke-width="1.6" fill="none" stroke-linecap="butt" stroke-linejoin="round" /><rect x="0.9" y="9.4" width="18.1" height="15.5" rx="2.2" stroke="#2b2b2b" stroke-width="1.5" fill="none"/></svg>
<svg class="a" style="left:502.3px;top:350px;" width="24" height="34" viewBox="0 0 24 34" fill="none"><path d="M0.8 9 H18.6 M5.6 19 H13.6" stroke="#3d3d3d" stroke-width="1.7" fill="none" stroke-linecap="round" stroke-linejoin="round" /><path d="M3 14 H16.2 M8 24 H11.2" stroke="#4fc1f1" stroke-width="1.7" fill="none" stroke-linecap="round" stroke-linejoin="round" /></svg>
<svg class="a" style="left:535.15px;top:350px;" width="24" height="34" viewBox="0 0 24 34" fill="none"><path d="M7.33 10.14 L8.07 7.24 L11.23 7.24 L11.97 10.14 L13.56 11.06 L16.45 10.26 L18.02 12.99 L15.88 15.08 L15.88 16.92 L18.02 19.01 L16.45 21.74 L13.56 20.94 L11.97 21.86 L11.23 24.76 L8.07 24.76 L7.33 21.86 L5.74 20.94 L2.85 21.74 L1.28 19.01 L3.42 16.92 L3.42 15.08 L1.28 12.99 L2.85 10.26 L5.74 11.06 Z" stroke="#3d3d3d" stroke-width="1.7" fill="none" stroke-linecap="round" stroke-linejoin="round" /><circle cx="9.65" cy="16" r="3.1" stroke="#4fc1f1" stroke-width="2" fill="none"/></svg>
<svg class="a" style="left:575px;top:350px;" width="24" height="34" viewBox="0 0 24 34" fill="none"><text x="-0.3" y="10.9" font-family="Liberation Sans, sans-serif" font-weight="bold" font-size="6.6" fill="#4fc1f1">1</text><path d="M7.4 9 H18.2" stroke="#3d3d3d" stroke-width="1.6" fill="none" stroke-linecap="round" stroke-linejoin="round" /><text x="-0.3" y="18.6" font-family="Liberation Sans, sans-serif" font-weight="bold" font-size="6.6" fill="#4fc1f1">2</text><path d="M7.4 16.6 H18.2" stroke="#3d3d3d" stroke-width="1.6" fill="none" stroke-linecap="round" stroke-linejoin="round" /><text x="-0.3" y="26" font-family="Liberation Sans, sans-serif" font-weight="bold" font-size="6.6" fill="#4fc1f1">3</text><path d="M7.4 24 H18.2" stroke="#3d3d3d" stroke-width="1.6" fill="none" stroke-linecap="round" stroke-linejoin="round" /></svg>
<svg class="a" style="left:606.3px;top:350px;" width="24" height="34" viewBox="0 0 24 34" fill="none"><path d="M0.7 7.7 H18.8 M0.7 12.85 H18.8 M0.7 17.8 H7.6 M0.7 22.85 H7.6" stroke="#3d3d3d" stroke-width="1.6" fill="none" stroke-linecap="round" stroke-linejoin="round" /><path d="M11.1 20.45 H19.3 M15.2 16.35 V24.55" stroke="#4fc1f1" stroke-width="1.6" fill="none" stroke-linecap="butt" stroke-linejoin="round" /></svg>
<svg class="a" style="left:645.7px;top:350px;" width="24" height="34" viewBox="0 0 24 34" fill="none"><path d="M7.4 11.2 H3.2 Q0.9 11.2 0.9 13.5 V21.9 Q0.9 24.2 3.2 24.2 H12.2 Q14.5 24.2 14.5 21.9 V17.4" stroke="#3d3d3d" stroke-width="1.8" fill="none" stroke-linecap="round" stroke-linejoin="round" /><path d="M8.8 16.4 L18 7.4 M10.4 7.2 H18.3 V15" stroke="#4fc1f1" stroke-width="1.7" fill="none" stroke-linecap="butt" stroke-linejoin="round" /></svg>
<svg class="a" style="left:684.5px;top:350px;" width="24" height="34" viewBox="0 0 24 34" fill="none"><path d="M3.2 21.7 H0.8 V10.4 H12.6 M9 6.7 L13 10.4 L9 14.1" stroke="#2b2b2b" stroke-width="1.7" fill="none" stroke-linecap="butt" stroke-linejoin="round" /><path d="M15.8 10.4 H18.8 V21.6 H6.4 M10 17.8 L5.9 21.6 L10 25.4" stroke="#4fc1f1" stroke-width="1.7" fill="none" stroke-linecap="butt" stroke-linejoin="round" /></svg>
<div class="a" style="left:492px;top:353.2px;width:1px;height:26.6px;background:#cbcbcb;"></div>
<div class="a" style="left:564px;top:353.2px;width:1px;height:26.6px;background:#cbcbcb;"></div>
<div class="a" style="left:635px;top:353.2px;width:1px;height:26.6px;background:#cbcbcb;"></div>
<div class="a" style="left:674px;top:353.2px;width:1px;height:26.6px;background:#cbcbcb;"></div>
<svg class="a" style="left:1004px;top:358px;" width="15.1" height="15.1" viewBox="0 0 14.6 14.6" fill="none"><rect x="0" y="0" width="14.6" height="14.6" rx="2.8" fill="#0d6efd"/><path d="M3.4 7.7 L6.2 10.5 L11.3 4.4" stroke="#fff" stroke-width="2" fill="none" stroke-linecap="round" stroke-linejoin="round"/></svg>
<div class="t" style="left:1024.00px;top:357.00px;font-size:15px;color:#1b1b1b;letter-spacing:-0.361px;">Открыт (F6)</div>
<div class="a" style="left:1108.2px;top:353px;width:123.3px;height:27px;background:#ffffff;border:1px solid #c4c4c4;border-radius:5px;"></div>
<div class="t" style="left:1127.00px;top:357.00px;font-size:15px;color:#1b1b1b;letter-spacing:-0.278px;">Распровести</div>
<div class="a" style="left:1237px;top:353px;width:93.4px;height:27px;background:#ffffff;border:1px solid #c4c4c4;border-radius:5px;"></div>
<div class="t" style="left:1256.80px;top:357.00px;font-size:15px;color:#1b1b1b;letter-spacing:-0.312px;">Закрыть</div>
<div class="a" style="left:1336.3px;top:353px;width:122.9px;height:27px;background:#ffffff;border:1px solid #c4c4c4;border-radius:5px;"></div>
<svg class="a" style="left:1359px;top:360.4px;" width="12.4" height="12.4" viewBox="0 0 12.4 12.4" fill="none"><path d="M6.2 0 V12.4 M0 6.2 H12.4" stroke="#5c5c5c" stroke-width="2"/></svg>
<div class="t" style="left:1374.70px;top:357.00px;font-size:15px;color:#1b1b1b;letter-spacing:-0.037px;">Добавить</div>
<div class="a" style="left:1465px;top:353px;width:158.2px;height:27px;background:#ffffff;border:1px solid #c4c4c4;border-radius:5px;"></div>
<svg class="a" style="left:1486px;top:359px;" width="15" height="15" viewBox="0 0 15 15" fill="none"><path d="M0.5 14.2 H14.5" stroke="#5bc4f0" stroke-width="1.4"/><path d="M2.2 12 L3.2 8.4 L10 1.6 Q11 0.8 12 1.8 L12.6 2.4 Q13.4 3.4 12.6 4.2 L5.8 11 Z" stroke="#4a4a4a" stroke-width="1.7" fill="#e4e4e4" stroke-linejoin="round"/></svg>
<div class="t" style="left:1503.50px;top:357.00px;font-size:15px;color:#1b1b1b;letter-spacing:-0.194px;">Редактировать</div>
<div class="a" style="left:1629px;top:353px;width:111.7px;height:27px;background:#ffffff;border:1px solid #c4c4c4;border-radius:5px;"></div>
<div class="a" style="left:1651px;top:365.5px;width:13px;height:2px;background:#8a8a8a;"></div>
<div class="t" style="left:1667.60px;top:357.00px;font-size:15px;color:#1b1b1b;letter-spacing:-0.469px;">Удалить</div>
<div class="a" style="left:389px;top:386.5px;width:1358px;height:1px;background:#d0d0d0;"></div>
<div class="a" style="left:389px;top:393px;width:1358px;height:1px;background:#d0d0d0;"></div>
<div class="a" style="left:397px;top:396px;width:79px;height:28px;background:#d5e5ea;border:1.5px solid #1b8bb4;border-radius:5px 5px 0 0;border-bottom:none;"></div>
<div class="a" style="left:480.3px;top:396.5px;width:71.4px;height:27.5px;background:#f3f3f3;border:1px solid #d6d6d6;border-radius:5px 5px 0 0;border-bottom:none;"></div>
<div class="a" style="left:555.9px;top:396.5px;width:101.6px;height:27.5px;background:#f3f3f3;border:1px solid #d6d6d6;border-radius:5px 5px 0 0;border-bottom:none;"></div>
<div class="a" style="left:662px;top:396.5px;width:85px;height:27.5px;background:#f3f3f3;border:1px solid #d6d6d6;border-radius:5px 5px 0 0;border-bottom:none;"></div>
<div class="t" style="left:411.40px;top:401.00px;font-size:15px;color:#1b1b1b;letter-spacing:-0.118px;">Товары</div>
<div class="t" style="left:494.30px;top:401.00px;font-size:15px;color:#1b1b1b;letter-spacing:-0.273px;">Описи</div>
<div class="t" style="left:569.50px;top:401.00px;font-size:15px;color:#1b1b1b;letter-spacing:-0.226px;">Ведомости</div>
<div class="t" style="left:675.80px;top:401.00px;font-size:15px;color:#1b1b1b;letter-spacing:-0.096px;">История</div>
<div class="a" style="left:390px;top:423px;width:1356px;height:354.8px;background:#f3f3f3;border:1px solid #cfcfcf;border-radius:5px;"></div>
<div class="a" style="left:394.3px;top:438.2px;width:1347.7px;height:336.5px;border:1px solid #cfcfcf;border-radius:5px;"></div>
<div class="a" style="left:400.5px;top:431px;width:236px;height:14px;background:#f3f3f3;"></div>
<div class="t" style="left:403.20px;top:425.00px;font-size:15px;color:#a3a3a3;letter-spacing:-0.076px;">Товары с недостачей (излишком)</div>
<div class="a" style="left:399px;top:444px;width:1338px;height:293px;background:#fff;border:1px solid #b6b6b6;border-radius:2px 2px 4px 4px;"></div>
<div class="a" style="left:400px;top:445px;width:1336px;height:43.3px;background:#f2f2f2;"></div>
<div class="a" style="left:400px;top:488.3px;width:1336px;height:26.2px;background:#d5e5ea;"></div>
<div class="a" style="left:400px;top:540px;width:1336px;height:1px;background:#e3e3e3;"></div>
<div class="a" style="left:400px;top:567.2px;width:1336px;height:1px;background:#e3e3e3;"></div>
<div class="a" style="left:626px;top:445px;width:1px;height:122px;background:#e2e2e2;"></div>
<div class="a" style="left:954px;top:445px;width:1px;height:122px;background:#e2e2e2;"></div>
<div class="a" style="left:1284px;top:445px;width:1px;height:122px;background:#e2e2e2;"></div>
<div class="a" style="left:1510px;top:445px;width:1px;height:122px;background:#e2e2e2;"></div>
<svg class="a" style="left:484.9px;top:458.8px;" width="15.2" height="15.2" viewBox="0 0 15.2 15.2" fill="none"><circle cx="7.6" cy="7.6" r="6.5" fill="#f2f6f8" stroke="#7fd0f5" stroke-width="2.2"/><path d="M4.2 9.6 L7.6 5.9 L11 9.6" stroke="#555" stroke-width="2.1" fill="none" stroke-linejoin="round"/></svg>
<div class="t" style="left:503.00px;top:457.00px;font-size:15px;color:#1b1b1b;letter-spacing:-0.744px;">Склад</div>
<div class="t" style="left:756.81px;top:457.00px;font-size:15px;color:#1b1b1b;letter-spacing:-0.120px;">Штрихкод</div>
<svg class="a" style="left:1091.4px;top:458.8px;" width="15.2" height="15.2" viewBox="0 0 15.2 15.2" fill="none"><circle cx="7.6" cy="7.6" r="6.5" fill="#f2f6f8" stroke="#7fd0f5" stroke-width="2.2"/><path d="M4.2 9.6 L7.6 5.9 L11 9.6" stroke="#555" stroke-width="2.1" fill="none" stroke-linejoin="round"/></svg>
<div class="t" style="left:1109.00px;top:457.00px;font-size:15px;color:#1b1b1b;letter-spacing:0.034px;">Товар</div>
<div class="t" style="left:1299.50px;top:457.00px;font-size:15px;color:#1b1b1b;letter-spacing:0.061px;">Кол-во недостачи / излишка</div>
<div class="t" style="left:1526.50px;top:457.00px;font-size:15px;color:#1b1b1b;letter-spacing:-0.056px;">Сумма недостачи / излишка</div>
<div class="t" style="left:403.60px;top:492.00px;font-size:15px;color:#1b1b1b;letter-spacing:0.046px;">Medicine</div>
<div class="t" style="left:631.40px;top:492.00px;font-size:15px;color:#1b1b1b;letter-spacing:-0.327px;">5901348190383</div>
<div class="t" style="left:959.30px;top:492.00px;font-size:15px;color:#1b1b1b;letter-spacing:-0.443px;width:324.7px;overflow:hidden;">сорочка-поло /RS19POM301 /FRESH GREEN MELANGE</div>
<div class="t" style="left:1498.08px;top:492.00px;font-size:15px;color:#1b1b1b;letter-spacing:-0.120px;">1</div>
<div class="t" style="left:1715.15px;top:492.00px;font-size:15px;color:#1b1b1b;letter-spacing:-0.120px;">36</div>
<div class="t" style="left:403.60px;top:518.00px;font-size:15px;color:#1b1b1b;letter-spacing:0.046px;">Medicine</div>
<div class="t" style="left:631.40px;top:518.00px;font-size:15px;color:#1b1b1b;letter-spacing:-0.327px;">5901348190390</div>
<div class="t" style="left:959.30px;top:518.00px;font-size:15px;color:#1b1b1b;letter-spacing:-0.235px;width:324.7px;overflow:hidden;">сорочка-поло /RS19POM301 /FUCHSIA MELANGE</div>
<div class="t" style="left:1498.08px;top:518.00px;font-size:15px;color:#1b1b1b;letter-spacing:-0.120px;">1</div>
<div class="t" style="left:1715.15px;top:518.00px;font-size:15px;color:#1b1b1b;letter-spacing:-0.120px;">36</div>
<div class="t" style="left:403.60px;top:544.00px;font-size:15px;color:#1b1b1b;letter-spacing:0.046px;">Medicine</div>
<div class="t" style="left:631.40px;top:544.00px;font-size:15px;color:#1b1b1b;letter-spacing:-0.327px;">5901348257512</div>
<div class="t" style="left:959.30px;top:544.00px;font-size:15px;color:#1b1b1b;letter-spacing:-0.107px;width:324.7px;overflow:hidden;">сорочка-поло /RS19POM901 /MLC /S</div>
<div class="t" style="left:1498.08px;top:544.00px;font-size:15px;color:#1b1b1b;letter-spacing:-0.120px;">2</div>
<div class="t" style="left:1715.15px;top:544.00px;font-size:15px;color:#1b1b1b;letter-spacing:-0.120px;">66</div>
<div class="a" style="left:399px;top:742px;width:27px;height:28px;background:#d5e5ea;border:1px solid #bccacf;border-radius:5px;"></div>
<svg class="a" style="left:402.2px;top:739.8px;" width="24" height="34" viewBox="0 0 24 34" fill="none"><rect x="0.75" y="7.8" width="3.6" height="3.6" rx="0.9" stroke="#4fc1f1" stroke-width="1.5" fill="#c8e9f7"/><path d="M8.4 10.4 H19.2" stroke="#3d3d3d" stroke-width="1.6" fill="none" stroke-linecap="round" stroke-linejoin="round" /><rect x="0.75" y="14.2" width="3.6" height="3.6" rx="0.9" stroke="#4fc1f1" stroke-width="1.5" fill="#c8e9f7"/><path d="M8.4 16.6 H19.2" stroke="#3d3d3d" stroke-width="1.6" fill="none" stroke-linecap="round" stroke-linejoin="round" /><rect x="0.75" y="20.5" width="3.6" height="3.6" rx="0.9" stroke="#4fc1f1" stroke-width="1.5" fill="#c8e9f7"/><path d="M8.4 22.8 H19.2" stroke="#3d3d3d" stroke-width="1.6" fill="none" stroke-linecap="round" stroke-linejoin="round" /></svg>
<svg class="a" style="left:435px;top:739.8px;" width="24" height="34" viewBox="0 0 24 34" fill="none"><path d="M6.9 7 V25 M12.9 7 V25 M0.8 12.85 H19 M0.8 18.85 H19" stroke="#4fc1f1" stroke-width="1.7" fill="none" stroke-linecap="butt" stroke-linejoin="round" /><rect x="0.8" y="7" width="18.1" height="17.9" rx="0.8" stroke="#2b2b2b" stroke-width="1.5" fill="none"/></svg>
<svg class="a" style="left:474.2px;top:739.8px;" width="24" height="34" viewBox="0 0 24 34" fill="none"><path d="M0.8 9 H18.6 M5.6 19 H13.6" stroke="#3d3d3d" stroke-width="1.7" fill="none" stroke-linecap="round" stroke-linejoin="round" /><path d="M3 14 H16.2 M8 24 H11.2" stroke="#4fc1f1" stroke-width="1.7" fill="none" stroke-linecap="round" stroke-linejoin="round" /></svg>
<svg class="a" style="left:506.3px;top:739.8px;" width="24" height="34" viewBox="0 0 24 34" fill="none"><path d="M7.33 10.14 L8.07 7.24 L11.23 7.24 L11.97 10.14 L13.56 11.06 L16.45 10.26 L18.02 12.99 L15.88 15.08 L15.88 16.92 L18.02 19.01 L16.45 21.74 L13.56 20.94 L11.97 21.86 L11.23 24.76 L8.07 24.76 L7.33 21.86 L5.74 20.94 L2.85 21.74 L1.28 19.01 L3.42 16.92 L3.42 15.08 L1.28 12.99 L2.85 10.26 L5.74 11.06 Z" stroke="#3d3d3d" stroke-width="1.7" fill="none" stroke-linecap="round" stroke-linejoin="round" /><circle cx="9.65" cy="16" r="3.1" stroke="#4fc1f1" stroke-width="2" fill="none"/></svg>
<svg class="a" style="left:545.8px;top:739.8px;" width="24" height="34" viewBox="0 0 24 34" fill="none"><text x="-0.3" y="10.9" font-family="Liberation Sans, sans-serif" font-weight="bold" font-size="6.6" fill="#4fc1f1">1</text><path d="M7.4 9 H18.2" stroke="#3d3d3d" stroke-width="1.6" fill="none" stroke-linecap="round" stroke-linejoin="round" /><text x="-0.3" y="18.6" font-family="Liberation Sans, sans-serif" font-weight="bold" font-size="6.6" fill="#4fc1f1">2</text><path d="M7.4 16.6 H18.2" stroke="#3d3d3d" stroke-width="1.6" fill="none" stroke-linecap="round" stroke-linejoin="round" /><text x="-0.3" y="26" font-family="Liberation Sans, sans-serif" font-weight="bold" font-size="6.6" fill="#4fc1f1">3</text><path d="M7.4 24 H18.2" stroke="#3d3d3d" stroke-width="1.6" fill="none" stroke-linecap="round" stroke-linejoin="round" /></svg>
<svg class="a" style="left:577px;top:739.8px;" width="24" height="34" viewBox="0 0 24 34" fill="none"><path d="M0.7 7.7 H18.8 M0.7 12.85 H18.8 M0.7 17.8 H7.6 M0.7 22.85 H7.6" stroke="#3d3d3d" stroke-width="1.6" fill="none" stroke-linecap="round" stroke-linejoin="round" /><path d="M11.1 20.45 H19.3 M15.2 16.35 V24.55" stroke="#4fc1f1" stroke-width="1.6" fill="none" stroke-linecap="butt" stroke-linejoin="round" /></svg>
<svg class="a" style="left:615.6px;top:739.8px;" width="24" height="34" viewBox="0 0 24 34" fill="none"><path d="M7.4 11.2 H3.2 Q0.9 11.2 0.9 13.5 V21.9 Q0.9 24.2 3.2 24.2 H12.2 Q14.5 24.2 14.5 21.9 V17.4" stroke="#3d3d3d" stroke-width="1.8" fill="none" stroke-linecap="round" stroke-linejoin="round" /><path d="M8.8 16.4 L18 7.4 M10.4 7.2 H18.3 V15" stroke="#4fc1f1" stroke-width="1.7" fill="none" stroke-linecap="butt" stroke-linejoin="round" /></svg>
<svg class="a" style="left:654.7px;top:739.8px;" width="24" height="34" viewBox="0 0 24 34" fill="none"><path d="M3.2 21.7 H0.8 V10.4 H12.6 M9 6.7 L13 10.4 L9 14.1" stroke="#2b2b2b" stroke-width="1.7" fill="none" stroke-linecap="butt" stroke-linejoin="round" /><path d="M15.8 10.4 H18.8 V21.6 H6.4 M10 17.8 L5.9 21.6 L10 25.4" stroke="#4fc1f1" stroke-width="1.7" fill="none" stroke-linecap="butt" stroke-linejoin="round" /></svg>
<div class="a" style="left:464px;top:743px;width:1px;height:26.6px;background:#cbcbcb;"></div>
<div class="a" style="left:535px;top:743px;width:1px;height:26.6px;background:#cbcbcb;"></div>
<div class="a" style="left:606.3px;top:743px;width:1px;height:26.6px;background:#cbcbcb;"></div>
<div class="a" style="left:645px;top:743px;width:1px;height:26.6px;background:#cbcbcb;"></div>
<div class="t" style="left:391.60px;top:787.00px;font-size:15px;color:#1b1b1b;letter-spacing:0.021px;">Включить корректировку на форме</div>
<div class="a" style="left:642.3px;top:782.1px;width:39.4px;height:27.5px;background:#ffffff;border:1px solid #c4c4c4;border-radius:5px;"></div>
<svg class="a" style="left:655.1px;top:788px;" width="15" height="15" viewBox="0 0 14.6 14.6" fill="none"><rect x="0.7" y="0.7" width="13.2" height="13.2" rx="2.7" fill="#fff" stroke="#6f6f6f" stroke-width="1.4"/></svg>
<svg class="a" style="left:675px;top:801.9px;" width="6.2" height="6.2" viewBox="0 0 6.2 6.2" fill="none"><path d="M6.2 0 V4.2 Q6.2 6.2 4.2 6.2 H0 Z" fill="#1b8bb4"/></svg>
<div class="a" style="left:1221px;top:782.3px;width:57.8px;height:27.4px;background:#ffffff;border:1px solid #c4c4c4;border-radius:5px;"></div>
<div class="a" style="left:1284.2px;top:782.3px;width:129.4px;height:27.4px;background:#ffffff;border:1px solid #c4c4c4;border-radius:5px;"></div>
<div class="a" style="left:1419.1px;top:782.3px;width:123.5px;height:27.4px;background:#ffffff;border:1px solid #c4c4c4;border-radius:5px;"></div>
<div class="a" style="left:1548.3px;top:782.3px;width:77.2px;height:27.4px;background:#ffffff;border:1px solid #c4c4c4;border-radius:5px;"></div>
<div class="a" style="left:1631.3px;top:782.3px;width:113px;height:27.4px;background:#ffffff;border:1px solid #c4c4c4;border-radius:5px;"></div>
<svg class="a" style="left:1242px;top:788px;" width="15.4" height="15" viewBox="0 0 15.4 15" fill="none"><path d="M1.2 6.2 Q2.6 1.4 7.6 1.2 Q10.6 1.2 12.4 3.4" stroke="#3a3a3a" stroke-width="2.1" fill="none"/><path d="M15 0.2 V5.8 L9.8 4.4 Z" fill="#2e2e2e"/><path d="M14.4 9 Q13 13.8 8 14 Q5 14 3.2 11.8" stroke="#5bc4f0" stroke-width="2.1" fill="none"/><path d="M0.4 14.8 V9.2 L5.6 10.6 Z" fill="#5bc4f0"/></svg>
<svg class="a" style="left:1305px;top:788px;" width="15.2" height="15.2" viewBox="0 0 15.2 15.2" fill="none"><rect x="2" y="7" width="11.2" height="4.6" fill="#b9b9b9"/><rect x="2" y="8.6" width="11.2" height="1.4" fill="#ececec"/><path d="M1.2 3.4 Q1.2 1.2 3.4 1.2 H10.4 L14 4.8 V11.8 Q14 14 11.8 14 H3.4 Q1.2 14 1.2 11.8 Z" stroke="#2b2b2b" stroke-width="2.2" fill="none" stroke-linejoin="round"/></svg>
<div class="t" style="left:1322.40px;top:787.00px;font-size:15px;color:#858585;letter-spacing:-0.250px;">Сохранить</div>
<svg class="a" style="left:1440px;top:788px;" width="15" height="15.4" viewBox="0 0 15 15.4" fill="none"><rect x="5.2" y="0.3" width="4.6" height="2.8" fill="none" stroke="#bdbdbd" stroke-width="1.4"/><path d="M0.1 3.4 H14.9" stroke="#c4c4c4" stroke-width="2"/><defs><linearGradient id="tg" x1="0" y1="0" x2="0" y2="1"><stop offset="0" stop-color="#8a8a8a"/><stop offset="1" stop-color="#1e1e1e"/></linearGradient></defs><path d="M3.1 4.6 V13 Q3.1 14.2 4.3 14.2 H10.9 Q12.1 14.2 12.1 13 V4.6" stroke="url(#tg)" stroke-width="2" fill="none"/></svg>
<div class="t" style="left:1457.80px;top:787.00px;font-size:15px;color:#858585;letter-spacing:-0.293px;">Отменить</div>
<svg class="a" style="left:1568px;top:788.4px;" width="16" height="14" viewBox="0 0 16 14" fill="none"><path d="M1 8 L5.4 12.6 L15 1" stroke="#3c3c3c" stroke-width="1.9" fill="none" stroke-linejoin="miter"/></svg>
<div class="t" style="left:1587.30px;top:787.00px;font-size:15px;color:#1b1b1b;letter-spacing:-0.994px;">OK</div>
<svg class="a" style="left:1653px;top:788.6px;" width="13" height="12.5" viewBox="0 0 13 12.5" fill="none"><path d="M0.8 0.6 L12.2 11.9 M12.2 0.6 L0.8 11.9" stroke="#3c3c3c" stroke-width="1.9"/></svg>
<div class="t" style="left:1669.80px;top:787.00px;font-size:15px;color:#1b1b1b;letter-spacing:-0.297px;">Закрыть</div>
<svg class="a" style="left:0px;top:0px;pointer-events:none;" width="1751" height="817" viewBox="0 0 1751 817" fill="none"><path d="M1575.4 248.9 L1445 346" stroke="#ff0000" stroke-width="2.8" stroke-linecap="round"/><path d="M1437.2 351.8 L1444.2 339.2 L1450.8 348.2 Z" fill="#ff0000"/></svg>
</body></html>
